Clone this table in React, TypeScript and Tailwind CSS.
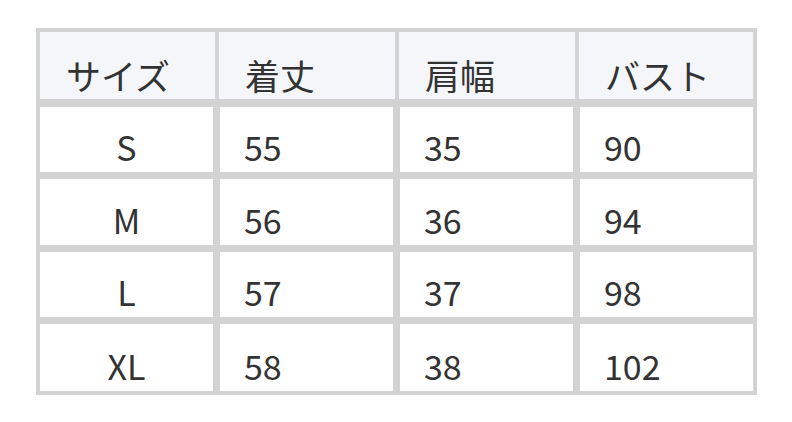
const headers = ["サイズ", "着丈", "肩幅", "バスト"];
const headerWidths = ["w-[175px]", "w-[176px]", "w-[176px]", "w-[174px]"];

const rows = [
  { size: "S", length: "55", shoulder: "35", bust: "90", h: "h-[65px]" },
  { size: "M", length: "56", shoulder: "36", bust: "94", h: "h-[66px]" },
  { size: "L", length: "57", shoulder: "37", bust: "98", h: "h-[65px]" },
  { size: "XL", length: "58", shoulder: "38", bust: "102", h: "h-[67px]" },
];

export default function App() {
  return (
    <div
      className="w-[792px] h-[422px] bg-white pt-[28px] pl-[36px] text-[#333333]"
      style={{ fontFamily: '"Noto Sans CJK JP", "Noto Sans", sans-serif' }}
    >
      <div className="w-[721px] border-4 border-[#d3d3d3] bg-[#d3d3d3] flex flex-col">
        {/* header row */}
        <div className="flex gap-[4px] h-[67px]">
          {headers.map((label, i) => (
            <div
              key={label}
              className={`${headerWidths[i]} bg-[#f5f6fa] flex items-end pl-[26px] pb-[7px] text-[35px] leading-none`}
            >
              {label}
            </div>
          ))}
        </div>

        {/* body rows */}
        <div className="flex flex-col gap-[7px] mt-[8px]">
          {rows.map((row) => (
            <div key={row.size} className={`flex gap-[7px] ${row.h}`}>
              <div className="w-[173px] bg-white flex items-end justify-center pb-[8px] text-[34px] leading-none">
                {row.size}
              </div>
              {[row.length, row.shoulder, row.bust].map((v, i) => (
                <div
                  key={i}
                  className="w-[173px] bg-white flex items-end pl-[24px] pb-[8px] text-[34px] leading-none"
                >
                  {v}
                </div>
              ))}
            </div>
          ))}
        </div>
      </div>
    </div>
  );
}
